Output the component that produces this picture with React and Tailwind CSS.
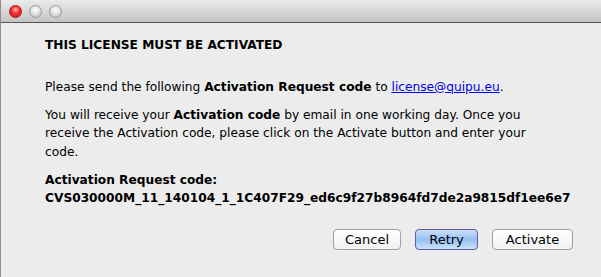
const font = { fontFamily: '"DejaVu Sans", "Liberation Sans", sans-serif' }

function Light({ red }) {
  return (
    <span
      className={`block w-[13px] h-[13px] rounded-full border ${
        red
          ? 'border-[#a01818] bg-[radial-gradient(circle_at_50%_35%,#ffc0c0_0%,#ff3030_40%,#c41010_100%)]'
          : 'border-[#9a9a9a] bg-[radial-gradient(circle_at_50%_35%,#ffffff_0%,#dedede_50%,#b8b8b8_100%)]'
      }`}
    />
  )
}

function Button({ children, primary, width }) {
  return (
    <button
      className={`${width} h-[21px] rounded-[4px] border text-[13px] leading-none text-black ${
        primary
          ? 'border-[#5a5aa8] bg-gradient-to-b from-[#cddff8] via-[#95bff0] to-[#cbe4fb]'
          : 'border-[#a0a0a0] bg-gradient-to-b from-white to-[#f1f1f1]'
      }`}
    >
      {children}
    </button>
  )
}

export default function App() {
  return (
    <div className="w-[601px] h-[277px] bg-[#ececec] flex flex-col overflow-hidden border-l border-[#8e8e8e]" style={font}>
      {/* Title bar */}
      <div className="h-[23px] shrink-0 flex items-center gap-[7px] pl-[8px] bg-gradient-to-b from-[#ebebeb] to-[#c4c4c4] border-b border-[#555]">
        <Light red />
        <Light />
        <Light />
      </div>

      {/* Body */}
      <div className="flex-1 pl-[44px] pr-[28px] pt-[13px] text-[12.2px] leading-[18.5px] text-black">
        <p className="font-bold">THIS LICENSE MUST BE ACTIVATED</p>
        <p className="mt-[23px]">
          Please send the following <b>Activation Request code</b> to{' '}
          <a className="text-[#0000ee] underline">license@quipu.eu</a>.
        </p>
        <p className="mt-[9.5px] max-w-[496px]">
          You will receive your <b>Activation code</b> by email in one working day. Once you receive the Activation
          code, please click on the Activate button and enter your code.
        </p>
        <p className="mt-[9.5px] font-bold">
          Activation Request code:
          <br />
          CVS030000M_11_140104_1_1C407F29_ed6c9f27b8964fd7de2a9815df1ee6e7
        </p>
        <div className="mt-[21px] flex justify-end gap-[14px]">
          <Button width="w-[68px]">Cancel</Button>
          <Button primary width="w-[63px]">Retry</Button>
          <Button width="w-[81px]">Activate</Button>
        </div>
      </div>
    </div>
  )
}
